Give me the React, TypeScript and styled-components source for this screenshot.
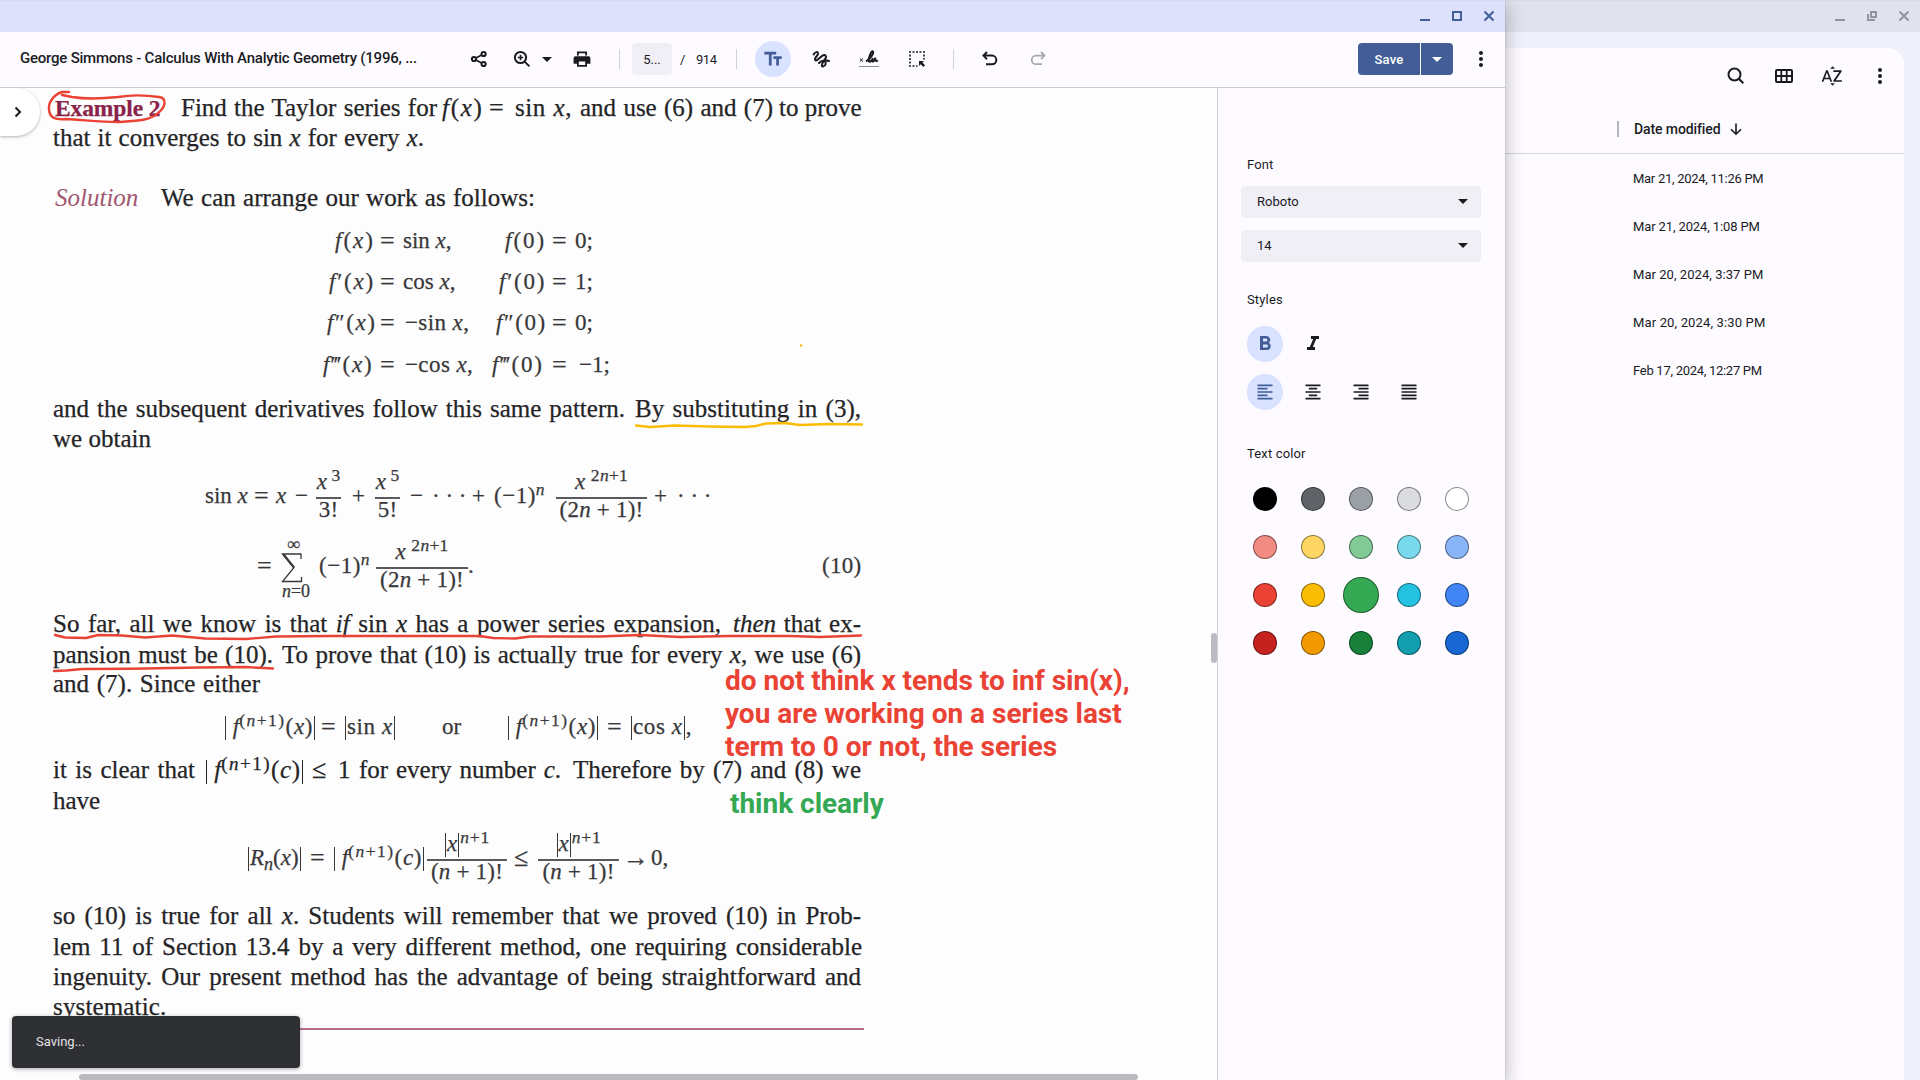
import React from "react";
import styled, { createGlobalStyle, css } from "styled-components";
import {
  MdFormatAlignCenter,
  MdFormatAlignJustify,
  MdFormatAlignLeft,
  MdFormatAlignRight,
  MdFormatBold,
  MdFormatItalic,
  MdMoreVert,
  MdSortByAlpha,
  MdTextFields,
} from "react-icons/md";

const Global = createGlobalStyle`
  * { box-sizing: border-box; }
  body { margin: 0; overflow: hidden; background: #fdfbff; }
`;

const ui = `Roboto, "Liberation Sans", sans-serif`;

const Desktop = styled.div`
  display: flex;
  width: 1920px;
  height: 1080px;
  overflow: hidden;
  font-family: ${ui};
  font-size: 13px;
  color: #1b1b1f;
`;

/* ---------- Viewer window ---------- */

const Viewer = styled.section`
  position: relative;
  z-index: 1;
  display: flex;
  flex-direction: column;
  width: 1505px;
  flex: none;
  background: #fdfbff;
  box-shadow: 0 0 1px rgba(0, 0, 0, 0.35), 2px 4px 16px rgba(0, 0, 0, 0.24);
`;

const TitleBar = styled.header<{ $inactive?: boolean }>`
  display: flex;
  justify-content: flex-end;
  align-items: center;
  gap: 16px;
  height: 32px;
  flex: none;
  padding: 0 8px 1px 0;
  background: ${(p) => (p.$inactive ? "#e0e2ee" : "#dde1fb")};
  color: ${(p) => (p.$inactive ? "#94949f" : "#435e97")};
  border-top: 1px solid ${(p) => (p.$inactive ? "#d9dbe7" : "#d8dcf3")};
`;

const Toolbar = styled.div`
  display: flex;
  align-items: center;
  height: 56px;
  flex: none;
  padding: 0 10px 1px 20px;
  border-bottom: 1px solid #cfcdd4;
`;

const DocTitle = styled.div`
  width: 440px;
  padding-bottom: 2px;
  font-size: 15px;
  font-weight: 500;
  letter-spacing: -0.22px;
  white-space: nowrap;
`;

const Tool = styled.div<{ $w: number; $on?: boolean; $dim?: boolean }>`
  display: flex;
  align-items: center;
  justify-content: center;
  width: ${(p) => p.$w}px;
  height: 36px;
  flex: none;
  color: ${(p) => (p.$on ? "#435e97" : p.$dim ? "#a9a8ad" : "#1b1b1f")};
  ${(p) =>
    p.$on &&
    css`
      border-radius: 50%;
      background: #d9e2ff;
    `}
  & > svg {
    flex: none;
  }
`;

const Divider = styled.div<{ $l: number; $r: number }>`
  width: 1px;
  height: 20px;
  margin: 0 ${(p) => p.$r}px 0 ${(p) => p.$l}px;
  background: #d3d2d9;
`;

const PageBox = styled.div`
  display: flex;
  align-items: center;
  justify-content: center;
  width: 40px;
  height: 32px;
  border-radius: 4px;
  background: #f0eff6;
  font-size: 13px;
`;

const PageTotal = styled.div`
  display: flex;
  gap: 11px;
  width: 56px;
  padding-left: 8px;
  letter-spacing: -0.4px;
`;

const SaveGroup = styled.div`
  display: flex;
  gap: 1px;
  margin-left: auto;
  margin-right: 14px;
`;

const SaveButton = styled.button<{ $arrow?: boolean }>`
  display: flex;
  align-items: center;
  justify-content: center;
  width: ${(p) => (p.$arrow ? 32 : 62)}px;
  height: 32px;
  padding: 0;
  border: 0;
  border-radius: ${(p) => (p.$arrow ? "0 4px 4px 0" : "4px 0 0 4px")};
  background: #435e97;
  color: #fff;
  font: 500 13px ${ui};
  letter-spacing: 0.2px;
`;

const Body = styled.div`
  display: flex;
  flex: 1;
  min-height: 0;
`;

const DocPane = styled.main`
  position: relative;
  width: 1217px;
  padding: 5px 0 0 53px;
  overflow: hidden;
  background: #fdfdfd;
  color: #242426;
  font-family: "Liberation Serif", "Times New Roman", serif;
  font-size: 25px;
`;

/* ---------- Book page ---------- */

const Line = styled.div<{ $mt?: number; $l?: number; $math?: boolean; $drop?: number }>`
  display: flex;
  align-items: flex-start;
  height: 30px;
  line-height: 30px;
  margin-top: ${(p) => p.$mt ?? 0}px;
  padding-top: ${(p) => p.$drop ?? 0}px;
  padding-left: ${(p) => p.$l ?? 0}px;
  white-space: nowrap;
  ${(p) => p.$math && "font-size: 23px; color: #38383a;"}
  -webkit-text-stroke: 0.25px currentColor;
`;

/* A run of words set flush to both edges of its width. */
const Run = styled.span<{ $w: number; $gap?: number; $ls?: number }>`
  flex: none;
  width: ${(p) => p.$w}px;
  margin-left: ${(p) => p.$gap ?? 0}px;
  text-align: justify;
  text-align-last: justify;
  letter-spacing: ${(p) => p.$ls ?? 0}px;
`;

const Cell = styled.span<{ $w: number; $ls?: number }>`
  flex: none;
  width: ${(p) => p.$w}px;
  letter-spacing: ${(p) => p.$ls ?? 0}px;
`;

/* Relation signs are set slightly larger than the letters around them. */
const Rel = styled(Cell)`
  font-size: 26px;
  text-indent: -1px;
`;

const Heading = styled(Run)`
  color: #8a2348;
  font-size: 23.5px;
  font-weight: 700;
  letter-spacing: -0.1px;
`;

const SolutionWord = styled(Run)`
  color: #a0566f;
  font-style: italic;
  -webkit-text-stroke: 0;
`;

const Sup = styled.span<{ $ls?: number }>`
  font-size: 0.76em;
  line-height: 0;
  vertical-align: 8px;
  letter-spacing: ${(p) => p.$ls ?? 0}px;
`;

const Sub = styled.span`
  font-size: 18px;
  line-height: 0;
  vertical-align: -5px;
`;

const Bar = styled.span`
  display: inline-block;
  width: 1px;
  height: 24px;
  margin: 0 1px;
  background: currentColor;
  vertical-align: -6px;
`;

const Frac = styled.span<{ $w: number; $r: number }>`
  display: flex;
  flex-direction: column;
  flex: none;
  align-items: center;
  width: ${(p) => p.$w}px;
  margin: -13px ${(p) => p.$r}px 0 0;
  & > :first-child {
    height: 27px;
    line-height: 27px;
    margin-bottom: 2px;
  }
  & > :last-child {
    line-height: 22px;
    letter-spacing: 0.2px;
  }
`;

const FracLine = styled.span`
  width: 100%;
  height: 2px;
  background: #5a5a5c;
`;

const Sum = styled.span`
  display: flex;
  flex-direction: column;
  align-items: center;
  flex: none;
  width: 34px;
  margin: -15px 6px 0 0;
  font-size: 18px;
  line-height: 17px;
  & > svg {
    margin: 0 8px 0 0;
  }
  & > :first-child {
    padding-right: 5px;
  }
`;

const Rule = styled.div`
  width: 811px;
  height: 2px;
  margin-top: 6px;
  background: #b46f86;
`;

/* ---------- Annotations and overlays ---------- */

const Ink = styled.svg`
  position: absolute;
  left: 0;
  top: -88px;
  pointer-events: none;
`;

const Note = styled.div<{ $x: number; $y: number; $green?: boolean }>`
  position: absolute;
  left: ${(p) => p.$x}px;
  top: ${(p) => p.$y}px;
  color: ${(p) => (p.$green ? "#34a853" : "#ea4335")};
  font: 700 28px/33px ${ui};
  letter-spacing: -0.02px;
  white-space: pre;
`;

const DrawerTab = styled.div`
  position: absolute;
  left: 0;
  top: 0;
  display: flex;
  align-items: center;
  width: 40px;
  height: 48px;
  padding-left: 9px;
  border-radius: 0 24px 24px 0;
  background: #fff;
  color: #1b1b1f;
  box-shadow: 0 1px 3px rgba(0, 0, 0, 0.3);
`;

const Toast = styled.div`
  position: absolute;
  left: 12px;
  top: 928px;
  display: flex;
  align-items: center;
  width: 288px;
  height: 52px;
  padding: 0 0 2px 24px;
  border-radius: 4px;
  background: #2f3034;
  color: #e4e2e6;
  font: 13px ${ui};
  box-shadow: 0 1px 4px rgba(0, 0, 0, 0.35);
`;

const Thumb = styled.div<{ $x: number; $y: number; $w: number; $h: number }>`
  position: absolute;
  left: ${(p) => p.$x}px;
  top: ${(p) => p.$y}px;
  width: ${(p) => p.$w}px;
  height: ${(p) => p.$h}px;
  border-radius: 3px;
  background: #bbbac1;
`;

/* ---------- Side panel ---------- */

const Panel = styled.aside`
  flex: 1;
  padding: 66px 23px 0;
  border-left: 1px solid #d3d2d9;
`;

const Label = styled.div<{ $mt?: number }>`
  height: 22px;
  margin: ${(p) => p.$mt ?? 0}px 0 0 6px;
  line-height: 22px;
  letter-spacing: 0.15px;
`;

const Select = styled.div<{ $mt: number }>`
  display: flex;
  align-items: center;
  justify-content: space-between;
  width: 240px;
  height: 32px;
  margin-top: ${(p) => p.$mt}px;
  padding: 0 13px 1px 16px;
  border-radius: 4px;
  background: #f0eff6;
`;

const ToggleRow = styled.div<{ $mt: number }>`
  display: flex;
  gap: 12px;
  margin: ${(p) => p.$mt}px 0 0 6px;
`;

const Swatches = styled.div`
  display: grid;
  grid-template-columns: repeat(5, 48px);
  grid-auto-rows: 48px;
  margin-top: 10px;
  place-items: center;
`;

const Swatch = styled.div<{ $c: string; $on?: boolean }>`
  width: ${(p) => (p.$on ? 36 : 24)}px;
  height: ${(p) => (p.$on ? 36 : 24)}px;
  border: 1px solid rgba(0, 0, 0, 0.45);
  border-radius: 50%;
  background: ${(p) => p.$c};
`;

/* ---------- Files window ---------- */

const Files = styled.section`
  display: flex;
  flex: 1;
  flex-direction: column;
  background: #eff0fa;
`;

const FilesSheet = styled.div`
  flex: 1;
  margin: 16px 16px 0 0;
  border-radius: 0 16px 0 0;
  background: #fdfbff;
`;

const FilesTools = styled.div`
  display: flex;
  justify-content: flex-end;
  align-items: center;
  gap: 24px;
  height: 56px;
  padding-right: 12px;
`;

const FilesHead = styled.div`
  display: flex;
  align-items: center;
  height: 50px;
  padding: 1px 0 0 112px;
  border-bottom: 1px solid #d6d5db;
  font-size: 14px;
  font-weight: 500;
`;

const Grip = styled.span`
  width: 2px;
  height: 16px;
  margin-right: 15px;
  background: #b4b3bf;
`;

const HeadText = styled.span`
  width: 94px;
  letter-spacing: -0.1px;
`;

const FileRow = styled.div<{ $ls: number }>`
  height: 48px;
  padding-left: 128px;
  line-height: 50px;
  letter-spacing: ${(p) => p.$ls}px;
`;

/* ---------- Icons ---------- */

const Icon = ({ children, size = 20 }: { children: React.ReactNode; size?: number }) => (
  <svg width={size} height={size} viewBox={`0 0 ${size} ${size}`} fill="none" stroke="currentColor" strokeWidth="2">
    {children}
  </svg>
);

const Caret = () => (
  <svg width="10" height="5" viewBox="0 0 10 5">
    <path d="M0 0h10L5 5z" fill="currentColor" />
  </svg>
);

const Minimize = () => (
  <Icon size={16}><path d="M3 12h10" /></Icon>
);
const Maximize = () => (
  <Icon size={16}><path d="M4 4h8v8H4z" /></Icon>
);
const Restore = () => (
  <Icon size={16}><path d="M7 4h5v5H7zM4 6v6h7" /></Icon>
);
const Close = () => (
  <Icon size={16}><path d="M3.5 3.5l9 9M12.5 3.5l-9 9" /></Icon>
);

const Share = () => (
  <Icon>
    <circle cx="5" cy="10" r="2.1" />
    <circle cx="14.6" cy="5" r="2.1" />
    <circle cx="14.6" cy="15" r="2.1" />
    <path d="M7 9l5.6-3M7 11l5.6 3" strokeWidth="1.6" />
  </Icon>
);

const ZoomIn = () => (
  <Icon>
    <circle cx="8.5" cy="8.5" r="5.6" />
    <path d="M12.6 12.6l4.8 4.8" />
    <path d="M8.5 5.8v5.4M5.8 8.5h5.4" strokeWidth="1.6" />
  </Icon>
);

const Print = () => (
  <svg width="20" height="20" viewBox="0 0 20 20">
    <path
      fill="currentColor"
      fillRule="evenodd"
      d="M5 2.5h10v4H5zM3.6 7.3h12.8a2 2 0 0 1 2 2v5.4H15v3H5v-3H1.6V9.3a2 2 0 0 1 2-2zM6.8 4.2v2.3h6.4V4.2zM6.8 12.5v3.6h6.4v-3.6z"
    />
  </svg>
);

const Scribble = () => (
  <Icon>
    <path
      d="M2.6 5.5C4 3 7.5 1.8 7 5C6.6 7.2 3 8.8 4.2 11C5.5 12.6 9 8.6 11 7C14.5 4.5 16.5 7.5 13.5 11C11.5 13.6 9.5 17.6 12 17.4C15 17 15.5 13.5 13.5 12C11.5 11 9 13 8 14M13.5 12C15 11.5 16.5 11.5 18 12"
      strokeLinecap="round"
    />
  </Icon>
);

const Signature = () => (
  <Icon>
    <path d="M.8 9.5l3.2 3.2M4 9.5L.8 12.7" strokeWidth="1" />
    <path
      d="M7 12.5C11.5 9.5 15 4.5 14 2.5C12.5 1 10 7.5 9.8 11C9.8 14 12 13 14 9.2C12.5 11.5 13 13 14.2 12.5C15.5 12 16 10 16.3 8.8C16.2 11.5 16.6 13 19 11.5"
      strokeWidth="2"
    />
    <path d="M.5 17.5h19" strokeWidth="1" strokeDasharray="1 1" />
  </Icon>
);

const SelectArea = () => (
  <Icon>
    <path
      d="M2 3h2M5.5 3h2M9 3h2M12.5 3h2M16 3h2M3 5.5v2M3 9v2M3 12.5v2M17 5.5v2M17 9v1.5M2 17h2M5.5 17h2M9 17h1.5"
      strokeWidth="1.6"
    />
    <path d="M12 12h5l-1.6 1.6L18 16.2L16.4 18l-2.7-2.7L12 17z" fill="currentColor" stroke="none" />
  </Icon>
);

const Undo = () => (
  <Icon>
    <path d="M7 3L3.5 6.6L7 10.2M4 6.6h8a4.3 4.3 0 0 1 0 8.6H6" />
  </Icon>
);

const Redo = () => (
  <Icon>
    <path d="M13 3l3.5 3.6L13 10.2M16 6.6H8a4.3 4.3 0 0 0 0 8.6h6" strokeWidth="1.8" />
  </Icon>
);

const Search = () => (
  <Icon size={24}>
    <circle cx="10.5" cy="10.5" r="6" />
    <path d="M15 15l4.3 4.3" strokeWidth="2.2" />
  </Icon>
);

const Grid = () => (
  <Icon size={24}>
    <rect x="4" y="6" width="16" height="12" rx="1" />
    <path d="M4 12h16M9.3 6v12M14.7 6v12" strokeWidth="1.8" />
  </Icon>
);

const ArrowDown = () => (
  <Icon size={16}><path d="M8 2.5v10.5M3 8.2l5 5l5-5" strokeWidth="1.6" /></Icon>
);

const Sigma = () => (
  <svg width="22" height="30" viewBox="0 0 22 30" fill="none" stroke="#38383a">
    <path d="M20 6V1H1.5L13 14.5L1.5 28.5H20.5V24" strokeWidth="1.3" />
    <path d="M2.5 1.5L13 14.5" strokeWidth="2.2" />
  </svg>
);

/* ---------- Math fragments ---------- */

const Arg = styled.span`
  letter-spacing: 0.6px;
`;

const FNth = ({ arg }: { arg: string }) => (
  <>
    <Bar /> <i>f</i>
    <Sup $ls={1.5}>(<i>n</i>+1)</Sup><Arg>(<i>{arg}</i>)</Arg><Bar />
  </>
);

const NumPower = () => (
  <span><i>x</i> <Sup $ls={0.3}>2<i>n</i>+1</Sup></span>
);
const AbsPower = () => (
  <span><Bar /><i>x</i><Bar /><Sup $ls={0.8}><i>n</i>+1</Sup></span>
);

const derivatives = [
  { primes: "", l: 282, a: 46, ls: 2, rhs: "sin x,", rw: 102, b: 48, val: "0;", vw: 22, mt: 12 },
  { primes: "′", l: 276, a: 52, ls: 1.8, rhs: "cos x,", rw: 96, b: 54, val: "1;", vw: 22, mt: 11 },
  { primes: "″", l: 274, a: 54, ls: 1.6, rhs: "−sin x,", rw: 91, b: 57, val: "0;", vw: 22, mt: 11 },
  { primes: "‴", l: 270, a: 58, ls: 1.8, rhs: "−cos x,", rw: 87, b: 61, val: "−1;", vw: 26, mt: 12 },
];

const colors = [
  "#000000", "#5f6368", "#9aa0a6", "#dadce0", "#ffffff",
  "#f28b82", "#fdd663", "#81c995", "#78d9ec", "#8ab4f8",
  "#ea4335", "#fbbc04", "#34a853", "#24c1e0", "#4285f4",
  "#c5221f", "#f29900", "#188038", "#129eaf", "#1967d2",
];

const dates = [
  { text: "Mar 21, 2024, 11:26 PM", ls: -0.28 },
  { text: "Mar 21, 2024, 1:08 PM", ls: -0.12 },
  { text: "Mar 20, 2024, 3:37 PM", ls: 0.05 },
  { text: "Mar 20, 2024, 3:30 PM", ls: 0.15 },
  { text: "Feb 17, 2024, 12:27 PM", ls: -0.28 },
];

const BookPage = () => (
  <>
    <Line $l={2}>
      <Heading $w={103}>Example 2</Heading>
      <Run $gap={23} $w={256}>Find the Taylor series for</Run>
      <Cell $w={5} />
      <Cell $w={48} $ls={1.7}><i>f</i>(<i>x</i>)</Cell>
      <Rel $w={25}>=</Rel>
      <Run $w={57} $ls={0.6}>sin <i>x</i>,</Run>
      <Run $gap={8} $w={193}>and use (6) and (7)</Run>
      <Run $gap={6} $w={82}>to prove</Run>
    </Line>
    <Line><Run $w={371}>that it converges to sin <i>x</i> for every <i>x</i>.</Run></Line>
    <Line $mt={30} $l={2}>
      <SolutionWord $w={81}>Solution</SolutionWord>
      <Run $gap={25} $w={374}>We can arrange our work as follows:</Run>
    </Line>

    {derivatives.map((d) => (
      <Line key={d.rhs} $math $mt={d.mt} $l={d.l} $drop={1}>
        <Cell $w={d.a} $ls={d.ls}><i>f</i>{d.primes}(<i>x</i>)</Cell>
        <Rel $w={d.rhs[0] === "−" ? 24 : 22}>=</Rel>
        <Cell $w={d.rw} $ls={d.rhs[0] === "−" ? 0.4 : 0}>{d.rhs.slice(0, -2)}<i>x</i>,</Cell>
        <Cell $w={d.b} $ls={d.ls}><i>f</i>{d.primes}(0)</Cell>
        <Rel $w={d.vw}>=</Rel>
        <Cell $w={34}>{d.val}</Cell>
      </Line>
    ))}

    <Line $mt={15}>
      <Run $w={572}>and the subsequent derivatives follow this same pattern.</Run>
      <Run $gap={10} $w={226}>By substituting in (3),</Run>
    </Line>
    <Line><Run $w={98}>we obtain</Run></Line>

    <Line $math $mt={25} $l={152} $drop={2}>
      <Cell $w={50}>sin <i>x</i></Cell>
      <Rel $w={21}>=</Rel>
      <Cell $w={19}><i>x</i></Cell>
      <Cell $w={21}>−</Cell>
      <Frac $w={25} $r={11}><span><i>x</i><Sup> 3</Sup></span><FracLine /><span>3!</span></Frac>
      <Cell $w={23}>+</Cell>
      <Frac $w={25} $r={10}><span><i>x</i><Sup> 5</Sup></span><FracLine /><span>5!</span></Frac>
      <Cell $w={22}>−</Cell>
      <Run $w={32}>· · ·</Run>
      <Cell $w={8} />
      <Cell $w={22}>+</Cell>
      <Cell $w={62} $ls={0.5}>(−1)<Sup><i>n</i></Sup></Cell>
      <Frac $w={91} $r={7}><NumPower /><FracLine /><span>(2<i>n</i> + 1)!</span></Frac>
      <Cell $w={23}>+</Cell>
      <Run $w={32}>· · ·</Run>
    </Line>

    <Line $math $mt={40} $l={205} $drop={2}>
      <Rel $w={21}>=</Rel>
      <Sum><span>∞</span><Sigma /><span><i>n</i>=0</span></Sum>
      <Cell $w={57} $ls={0.5}>(−1)<Sup><i>n</i></Sup></Cell>
      <Frac $w={92} $r={0}><NumPower /><FracLine /><span>(2<i>n</i> + 1)!</span></Frac>
      <Cell $w={354}>.</Cell>
      <Cell $w={40} $ls={0.3}>(10)</Cell>
    </Line>

    <Line $mt={30}>
      <Run $w={668}>So far, all we know is that <i>if</i> sin <i>x</i> has a power series expansion,</Run>
      <Run $gap={12} $w={128}><i>then</i> that ex-</Run>
    </Line>
    <Line $drop={1}>
      <Run $w={220}>pansion must be (10).</Run>
      <Run $gap={9} $w={579}>To prove that (10) is actually true for every <i>x</i>, we use (6)</Run>
    </Line>
    <Line><Run $w={207}>and (7). Since either</Run></Line>

    <Line $math $mt={11} $l={171} $drop={2}>
      <Cell $w={98}><FNth arg="x" /></Cell>
      <Rel $w={22}>=</Rel>
      <Cell $w={98} $ls={0.6}><Bar />sin <i>x</i><Bar /></Cell>
      <Cell $w={65}>or</Cell>
      <Cell $w={101}><FNth arg="x" /></Cell>
      <Rel $w={22}>=</Rel>
      <Cell $w={64} $ls={0.6}><Bar />cos <i>x</i><Bar />,</Cell>
    </Line>

    <Line $mt={15}>
      <Run $w={142}>it is clear that</Run>
      <Cell $w={10} />
      <Cell $w={108}><FNth arg="c" /></Cell>
      <Rel $w={25} $ls={0}>≤</Rel>
      <Cell $w={21}>1</Cell>
      <Run $w={202}>for every number <i>c</i>.</Run>
      <Run $gap={12} $w={288}>Therefore by (7) and (8) we</Run>
    </Line>
    <Line $drop={1}><Run $w={46}>have</Run></Line>

    <Line $math $mt={26} $l={194} $drop={2}>
      <Cell $w={64}><Bar /><i>R</i><Sub><i>n</i></Sub>(<i>x</i>)<Bar /></Cell>
      <Rel $w={22}>=</Rel>
      <Cell $w={94}><FNth arg="c" /></Cell>
      <Frac $w={80} $r={8}><AbsPower /><FracLine /><span>(<i>n</i> + 1)!</span></Frac>
      <Rel $w={23}>≤</Rel>
      <Frac $w={81} $r={5}><AbsPower /><FracLine /><span>(<i>n</i> + 1)!</span></Frac>
      <Rel $w={27}>→</Rel>
      <Cell $w={20}>0,</Cell>
    </Line>

    <Line $mt={30}>
      <Run $w={808}>so (10) is true for all <i>x</i>. Students will remember that we proved (10) in Prob-</Run>
    </Line>
    <Line $mt={1}>
      <Run $w={809}>lem 11 of Section 13.4 by a very different method, one requiring considerable</Run>
    </Line>
    <Line>
      <Run $w={808}>ingenuity. Our present method has the advantage of being straightforward and</Run>
    </Line>
    <Line><Run $w={113} $ls={0.15}>systematic.</Run></Line>
    <Rule />
  </>
);

const InkLayer = () => (
  <Ink width="1217" height="1080" viewBox="0 0 1217 1080" fill="none" strokeLinecap="round" strokeLinejoin="round">
    <g stroke="#ea4335" strokeWidth="2.4">
      <path d="M69 92H62C53 95 48 103 49 110C50 118 55 120 66 119C85 120 100 122 118 122C135 121 150 121 158 113C166 107 167 98 159 97C145 95 130 95 118 97C100 99 85 99 72 97L62 95" />
      <path d="M55 635L65 637.5L86 638L98 635L122 635.5L145 637.5L172 635.5L205 638.5L246 639L276 636.5L330 636H480L493 638L515 638.5L530 636.5L600 636.5L640 635L680 637L730 636L790 636L820 637L861 635.5" />
      <path d="M54 671L66 670.5L82 669L130 668.8L200 667.5L245 667L273 668.5" />
    </g>
    <path
      d="M636 425.5L650 427L675 425.5L710 426.5L745 427L756 426L766 423.5L785 423L800 425L830 424L862 424.5"
      stroke="#fbbc04"
      strokeWidth="2.4"
    />
    <circle cx="801" cy="345.5" r="1.2" fill="#fbbc04" />
  </Ink>
);

export default function App() {
  return (
    <Desktop>
      <Global />
      <Viewer>
        <TitleBar><Minimize /><Maximize /><Close /></TitleBar>
        <Toolbar>
          <DocTitle>George Simmons - Calculus With Analytic Geometry (1996, ...</DocTitle>
          <Tool $w={37}><Share /></Tool>
          <Tool $w={50}><ZoomIn /></Tool>
          <Tool $w={0}><Caret /></Tool>
          <Tool $w={70}><Print /></Tool>
          <Divider $l={2} $r={12} />
          <PageBox>5...</PageBox>
          <PageTotal><span>/</span><span>914</span></PageTotal>
          <Divider $l={8} $r={18} />
          <Tool $w={36} $on><MdTextFields size={22} /></Tool>
          <Tool $w={60}><Scribble /></Tool>
          <Tool $w={36}><Signature /></Tool>
          <Tool $w={60}><SelectArea /></Tool>
          <Divider $l={6} $r={18} />
          <Tool $w={36}><Undo /></Tool>
          <Tool $w={60} $dim><Redo /></Tool>
          <SaveGroup>
            <SaveButton>Save</SaveButton>
            <SaveButton $arrow><Caret /></SaveButton>
          </SaveGroup>
          <Tool $w={28}><MdMoreVert size={24} /></Tool>
        </Toolbar>
        <Body>
          <DocPane>
            <BookPage />
            <InkLayer />
            <Note $x={725} $y={576}>{"do not think x tends to inf sin(x),\nyou are working on a series last\nterm to 0 or not, the series"}</Note>
            <Note $x={730} $y={699} $green>think clearly</Note>
            <DrawerTab>
              <Icon size={16}><path d="M6.5 3.5L11 8l-4.5 4.5" /></Icon>
            </DrawerTab>
            <Thumb $x={1211} $y={545} $w={6} $h={30} />
            <Thumb $x={79} $y={986} $w={1059} $h={6} />
            <Toast>Saving...</Toast>
          </DocPane>
          <Panel>
            <Label>Font</Label>
            <Select $mt={10}>Roboto<Caret /></Select>
            <Select $mt={12}>14<Caret /></Select>
            <Label $mt={27}>Styles</Label>
            <ToggleRow $mt={15}>
              <Tool $w={36} $on><MdFormatBold size={24} /></Tool>
              <Tool $w={36}><MdFormatItalic size={24} /></Tool>
            </ToggleRow>
            <ToggleRow $mt={12}>
              <Tool $w={36} $on><MdFormatAlignLeft size={20} /></Tool>
              <Tool $w={36}><MdFormatAlignCenter size={20} /></Tool>
              <Tool $w={36}><MdFormatAlignRight size={20} /></Tool>
              <Tool $w={36}><MdFormatAlignJustify size={20} /></Tool>
            </ToggleRow>
            <Label $mt={33}>Text color</Label>
            <Swatches>
              {colors.map((c) => (
                <Swatch key={c} $c={c} $on={c === "#34a853"} />
              ))}
            </Swatches>
          </Panel>
        </Body>
      </Viewer>
      <Files>
        <TitleBar $inactive><Minimize /><Restore /><Close /></TitleBar>
        <FilesSheet>
          <FilesTools><Search /><Grid /><MdSortByAlpha size={24} /><MdMoreVert size={24} /></FilesTools>
          <FilesHead><Grip /><HeadText>Date modified</HeadText><ArrowDown /></FilesHead>
          {dates.map((d) => (
            <FileRow key={d.text} $ls={d.ls}>{d.text}</FileRow>
          ))}
        </FilesSheet>
      </Files>
    </Desktop>
  );
}
